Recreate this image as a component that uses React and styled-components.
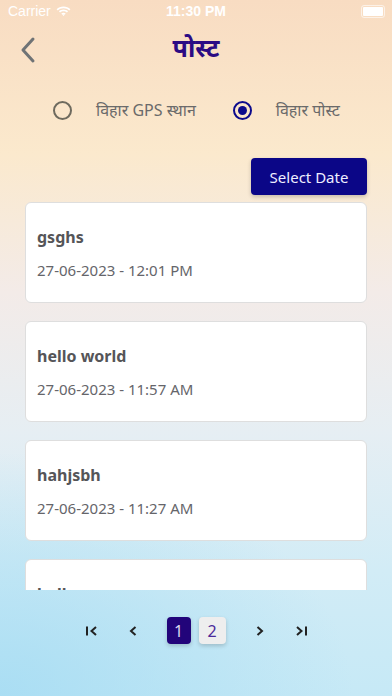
import React, { useState } from "react";
import styled, { createGlobalStyle } from "styled-components";

const GlobalStyle = createGlobalStyle`
  html, body {
    margin: 0;
    padding: 0;
  }
  body {
    font-family: "Noto Sans", "Liberation Sans", sans-serif;
  }
`;

const Screen = styled.div`
  width: 392px;
  height: 696px;
  overflow: hidden;
  display: flex;
  flex-direction: column;
  background:
    radial-gradient(ellipse 90% 35% at 0% 100%, rgba(165, 220, 243, 0.85) 0%, rgba(165, 220, 243, 0) 100%),
    linear-gradient(180deg, #f8dcc2 0%, #fbe9cd 22%, #f3ebe8 42%, #e6eef3 62%, #d2ecf6 82%, #c6e9f6 100%);
`;

const StatusBar = styled.div`
  height: 22px;
  display: flex;
  align-items: center;
  justify-content: space-between;
  padding: 0 8px;
  color: #fff;
  font-family: "Liberation Sans", sans-serif;
  font-size: 14px;
  position: relative;
  .left {
    display: flex;
    align-items: center;
    gap: 5px;
  }
  .time {
    position: absolute;
    left: 0;
    right: 0;
    text-align: center;
    font-weight: 700;
    font-size: 14px;
  }
`;

const Battery = styled.div`
  width: 20px;
  height: 9px;
  border: 1.5px solid rgba(255, 255, 255, 0.6);
  border-radius: 3px;
  padding: 1px;
  margin-right: -1px;
  div {
    width: 100%;
    height: 100%;
    background: #fff;
    border-radius: 1px;
  }
`;

const Header = styled.div`
  height: 52px;
  display: flex;
  align-items: center;
  justify-content: center;
  position: relative;
  margin-top: 2px;
`;

const Back = styled.button`
  position: absolute;
  left: 18px;
  top: 12px;
  border: none;
  background: none;
  padding: 0;
  display: flex;
`;

const Title = styled.h1`
  margin: 0;
  font-size: 25px;
  font-weight: 700;
  color: #2b0b84;
  font-family: "Noto Sans", "Liberation Sans", sans-serif;
  margin-top: -6px;
`;

const RadioRow = styled.div`
  display: flex;
  align-items: center;
  padding-left: 53px;
  margin-top: 14px;
  height: 40px;
`;

const RadioItem = styled.label`
  display: flex;
  align-items: center;
  margin-right: ${(p) => p.$gap}px;
  font-size: 16px;
  color: #6a6a6a;
`;

const Circle = styled.span`
  width: 19px;
  height: 19px;
  border-radius: 50%;
  border: 2px solid ${(p) => (p.$on ? "#0c0a8c" : "#6e6a5e")};
  display: flex;
  align-items: center;
  justify-content: center;
  margin-right: 24px;
  box-sizing: border-box;
  &::after {
    content: "";
    width: 9px;
    height: 9px;
    border-radius: 50%;
    background: ${(p) => (p.$on ? "#0c0a8c" : "transparent")};
  }
`;

const Actions = styled.div`
  display: flex;
  justify-content: flex-end;
  padding: 0 25px;
  margin-top: 28px;
`;

const DateButton = styled.button`
  width: 116px;
  height: 37px;
  background: #0b0687;
  color: #eef;
  border: none;
  border-radius: 4px;
  font-family: "Noto Sans", sans-serif;
  font-size: 15px;
  box-shadow: 0 2px 4px rgba(0, 0, 0, 0.2);
`;

const List = styled.div`
  height: 388px;
  margin-top: 7px;
  overflow: hidden;
  padding: 0 25px;
  display: flex;
  flex-direction: column;
  gap: 18px;
`;

const Card = styled.div`
  flex-shrink: 0;
  height: 101px;
  box-sizing: border-box;
  background: #fff;
  border: 1px solid #dedede;
  border-radius: 6px;
  padding: 23px 11px 0;
  .name {
    font-size: 16px;
    font-weight: 700;
    color: #555558;
  }
  .date {
    margin-top: 12px;
    font-size: 15px;
    color: #65656a;
  }
`;

const Pager = styled.div`
  display: flex;
  align-items: center;
  justify-content: center;
  margin-top: 27px;
`;

const PageIcon = styled.button`
  border: none;
  background: none;
  padding: 0;
  width: 22px;
  margin: 0 ${(p) => p.$mx || 0}px;
  display: flex;
  justify-content: center;
`;

const PageNum = styled.button`
  width: ${(p) => (p.$active ? 24 : 27)}px;
  height: 27px;
  margin: 0 4px;
  border: none;
  border-radius: 4px;
  font-family: "Noto Sans", sans-serif;
  font-size: 16px;
  padding: 0;
  background: ${(p) => (p.$active ? "#22047a" : "#eeeeee")};
  color: ${(p) => (p.$active ? "#ddd8f0" : "#4b2a9a")};
  box-shadow: 0 2px 4px rgba(0, 0, 0, 0.18);
`;

const Chevron = ({ dir = "left", bar }) => (
  <svg width="14" height="14" viewBox="0 0 14 14" fill="none" stroke="#222" strokeWidth="2">
    {dir === "left" ? (
      <>
        {bar && <path d="M2 2.5v9" />}
        <path d={bar ? "M11 3L6.5 7l4.5 4" : "M9.5 3L5 7l4.5 4"} />
      </>
    ) : (
      <>
        <path d={bar ? "M3 3l4.5 4L3 11" : "M4.5 3L9 7l-4.5 4"} />
        {bar && <path d="M12 2.5v9" />}
      </>
    )}
  </svg>
);

const posts = [
  { name: "gsghs", date: "27-06-2023 - 12:01 PM" },
  { name: "hello world", date: "27-06-2023 - 11:57 AM" },
  { name: "hahjsbh", date: "27-06-2023 - 11:27 AM" },
  { name: "hello", date: "27-06-2023 - 11:20 AM" },
];

export default function App() {
  const [mode, setMode] = useState("post");
  return (
    <Screen>
      <GlobalStyle />
      <StatusBar>
        <div className="left">
          Carrier
          <svg width="15" height="11" viewBox="0 0 15 11" fill="#fff">
            <path d="M7.5 2.2c2.2 0 4.2.8 5.7 2.2l1.2-1.2C12.6 1.5 10.2.5 7.5.5S2.4 1.5.6 3.2l1.2 1.2C3.3 3 5.3 2.2 7.5 2.2z" />
            <path d="M7.5 5.2c1.3 0 2.5.5 3.4 1.3l1.2-1.2C10.9 4.2 9.3 3.5 7.5 3.5S4.1 4.2 2.9 5.3l1.2 1.2c.9-.8 2.1-1.3 3.4-1.3z" />
            <path d="M7.5 8.2c.5 0 .9.2 1.2.5L7.5 10 6.3 8.7c.3-.3.7-.5 1.2-.5z" />
            <path d="M7.5 6.8c.9 0 1.6.3 2.2.8L8.7 8.7c-.3-.3-.7-.5-1.2-.5s-.9.2-1.2.5L5.3 7.6c.6-.5 1.3-.8 2.2-.8z" />
          </svg>
        </div>
        <div className="time">11:30 PM</div>
        <Battery>
          <div />
        </Battery>
      </StatusBar>
      <Header>
        <Back>
          <svg width="20" height="28" viewBox="0 0 20 28" fill="none" stroke="#6f7375" strokeWidth="3" strokeLinecap="round" strokeLinejoin="round">
            <path d="M15 3L5 14l10 11" />
          </svg>
        </Back>
        <Title>पोस्ट</Title>
      </Header>
      <RadioRow>
        <RadioItem $gap={37} onClick={() => setMode("gps")}>
          <Circle $on={mode === "gps"} />
          विहार GPS स्थान
        </RadioItem>
        <RadioItem $gap={0} onClick={() => setMode("post")}>
          <Circle $on={mode === "post"} />
          विहार पोस्ट
        </RadioItem>
      </RadioRow>
      <Actions>
        <DateButton>Select Date</DateButton>
      </Actions>
      <List>
        {posts.map((p) => (
          <Card key={p.name}>
            <div className="name">{p.name}</div>
            <div className="date">{p.date}</div>
          </Card>
        ))}
      </List>
      <Pager>
        <PageIcon>
          <Chevron dir="left" bar />
        </PageIcon>
        <PageIcon $mx={19}>
          <Chevron dir="left" />
        </PageIcon>
        <PageNum $active>1</PageNum>
        <PageNum>2</PageNum>
        <PageIcon $mx={19}>
          <Chevron dir="right" />
        </PageIcon>
        <PageIcon>
          <Chevron dir="right" bar />
        </PageIcon>
      </Pager>
    </Screen>
  );
}
